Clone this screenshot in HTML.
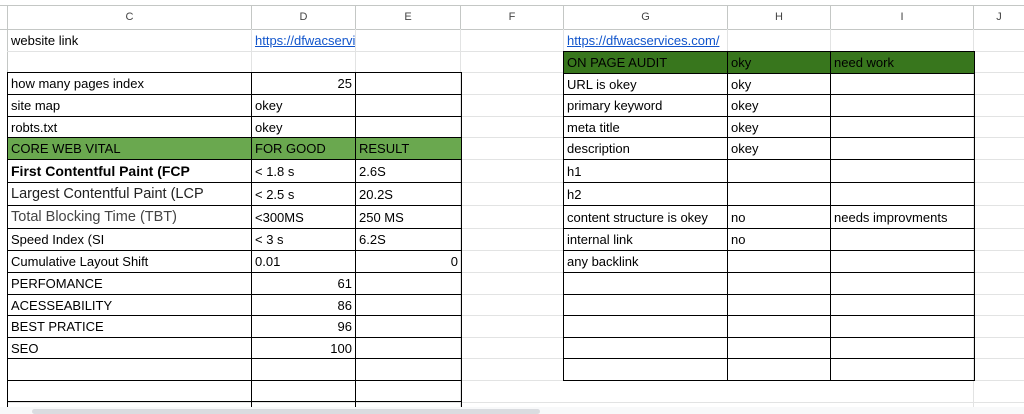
<!DOCTYPE html>
<html style="overflow:hidden;height:414px"><head><meta charset="utf-8"><style>
*{margin:0;padding:0;box-sizing:border-box}
body{width:1024px;height:414px;overflow:hidden;background:#fff;font-family:"Liberation Sans",Arial,sans-serif;font-size:13px;color:#000;position:relative}
.l{position:absolute;background:#e2e3e3}
.t{position:absolute;white-space:nowrap;overflow:hidden;line-height:21px;padding:0 3px}
.hd{position:absolute;top:5px;height:24px;line-height:24px;text-align:center;font-size:11px;color:#444;border-right:1px solid #c4c7c5}
table{position:absolute;border-collapse:collapse;table-layout:fixed}
td{border:1px solid #000;padding:0 3px;white-space:nowrap;overflow:hidden;font-size:13px;height:21px;line-height:19px}
.r{text-align:right}
.g1 td{background:#6aa84f}
.g2 td{background:#38761d}
a{color:#1155cc;text-decoration:underline}
</style></head><body>
<div style="position:absolute;left:0;top:5px;width:1024px;height:1px;background:#c4c7c5"></div>
<div style="position:absolute;left:0;top:29px;width:1024px;height:1px;background:#c4c7c5"></div>
<div style="position:absolute;left:7px;top:5px;width:1px;height:409px;background:#c4c7c5"></div>
<div class="hd" style="left:8px;width:244px">C</div>
<div class="hd" style="left:252px;width:104px">D</div>
<div class="hd" style="left:356px;width:105px">E</div>
<div class="hd" style="left:461px;width:103px">F</div>
<div class="hd" style="left:564px;width:164px">G</div>
<div class="hd" style="left:728px;width:103px">H</div>
<div class="hd" style="left:831px;width:143px">I</div>
<div class="hd" style="left:974px;width:50px;border:none">J</div>
<div class="l" style="left:7px;top:51px;width:1017px;height:1px"></div>
<div class="l" style="left:7px;top:72px;width:1017px;height:1px"></div>
<div class="l" style="left:460px;top:94px;width:564px;height:1px"></div>
<div class="l" style="left:460px;top:116px;width:564px;height:1px"></div>
<div class="l" style="left:460px;top:137px;width:564px;height:1px"></div>
<div class="l" style="left:460px;top:159px;width:564px;height:1px"></div>
<div class="l" style="left:460px;top:182px;width:564px;height:1px"></div>
<div class="l" style="left:460px;top:205px;width:564px;height:1px"></div>
<div class="l" style="left:460px;top:228px;width:564px;height:1px"></div>
<div class="l" style="left:460px;top:250px;width:564px;height:1px"></div>
<div class="l" style="left:460px;top:272px;width:564px;height:1px"></div>
<div class="l" style="left:460px;top:294px;width:564px;height:1px"></div>
<div class="l" style="left:460px;top:315px;width:564px;height:1px"></div>
<div class="l" style="left:460px;top:337px;width:564px;height:1px"></div>
<div class="l" style="left:460px;top:358px;width:564px;height:1px"></div>
<div class="l" style="left:460px;top:380px;width:564px;height:1px"></div>
<div class="l" style="left:7px;top:402px;width:1017px;height:1px"></div>
<div class="l" style="left:251px;top:29px;width:1px;height:43px"></div>
<div class="l" style="left:355px;top:29px;width:1px;height:43px"></div>
<div class="l" style="left:460px;top:29px;width:1px;height:385px"></div>
<div class="l" style="left:563px;top:29px;width:1px;height:22px"></div>
<div class="l" style="left:727px;top:29px;width:1px;height:22px"></div>
<div class="l" style="left:830px;top:29px;width:1px;height:22px"></div>
<div class="l" style="left:973px;top:29px;width:1px;height:385px"></div>
<div class="t" style="left:8px;top:30px;width:243px">website link</div>
<div class="t" style="left:252px;top:30px;width:103px"><a>https://dfwacservices.com/</a></div>
<div class="t" style="left:564px;top:30px;width:163px"><a>https://dfwacservices.com/</a></div>

<table style="left:7px;top:72px;width:454px">
<colgroup><col style="width:244px"><col style="width:104px"><col style="width:106px"></colgroup>
<tr style="height:22px"><td>how many pages index</td><td class="r">25</td><td></td></tr>
<tr style="height:22px"><td>site map</td><td>okey</td><td></td></tr>
<tr style="height:21px"><td>robts.txt</td><td>okey</td><td></td></tr>
<tr class="g1" style="height:22px"><td>CORE WEB VITAL</td><td>FOR GOOD</td><td>RESULT</td></tr>
<tr style="height:23px"><td style="font-weight:bold;font-size:14px">First Contentful Paint (FCP</td><td>&lt; 1.8 s</td><td>2.6S</td></tr>
<tr style="height:23px"><td style="font-size:14.5px;color:#222">Largest Contentful Paint (LCP</td><td>&lt; 2.5 s</td><td>20.2S</td></tr>
<tr style="height:23px"><td style="font-size:14.5px;color:#444">Total Blocking Time (TBT)</td><td>&lt;300MS</td><td>250 MS</td></tr>
<tr style="height:22px"><td>Speed Index (SI</td><td>&lt; 3 s</td><td>6.2S</td></tr>
<tr style="height:22px"><td>Cumulative Layout Shift</td><td>0.01</td><td class="r">0</td></tr>
<tr style="height:22px"><td>PERFOMANCE</td><td class="r">61</td><td></td></tr>
<tr style="height:21px"><td>ACESSEABILITY</td><td class="r">86</td><td></td></tr>
<tr style="height:22px"><td>BEST PRATICE</td><td class="r">96</td><td></td></tr>
<tr style="height:21px"><td>SEO</td><td class="r">100</td><td></td></tr>
<tr style="height:22px"><td></td><td></td><td></td></tr>
<tr style="height:21px"><td></td><td></td><td></td></tr>
<tr style="height:12px"><td style="height:12px"></td><td style="height:12px"></td><td style="height:12px"></td></tr>
</table>

<table style="left:563px;top:51px;width:411px">
<colgroup><col style="width:164px"><col style="width:103px"><col style="width:144px"></colgroup>
<tr class="g2" style="height:22px"><td>ON PAGE AUDIT</td><td>oky</td><td>need work</td></tr>
<tr style="height:21px"><td>URL is okey</td><td>oky</td><td></td></tr>
<tr style="height:22px"><td>primary keyword</td><td>okey</td><td></td></tr>
<tr style="height:21px"><td>meta title</td><td>okey</td><td></td></tr>
<tr style="height:22px"><td>description</td><td>okey</td><td></td></tr>
<tr style="height:23px"><td>h1</td><td></td><td></td></tr>
<tr style="height:23px"><td>h2</td><td></td><td></td></tr>
<tr style="height:23px"><td>content structure is okey</td><td>no</td><td>needs improvments</td></tr>
<tr style="height:22px"><td>internal link</td><td>no</td><td></td></tr>
<tr style="height:22px"><td>any backlink</td><td></td><td></td></tr>
<tr style="height:22px"><td></td><td></td><td></td></tr>
<tr style="height:21px"><td></td><td></td><td></td></tr>
<tr style="height:22px"><td></td><td></td><td></td></tr>
<tr style="height:21px"><td></td><td></td><td></td></tr>
<tr style="height:22px"><td></td><td></td><td></td></tr>
</table>
<div style="position:absolute;left:0;top:407px;width:1024px;height:7px;background:#f8f9fa"></div>
<div style="position:absolute;left:32px;top:409px;width:508px;height:5px;border-radius:3px;background:#dadce0"></div>
</body></html>
